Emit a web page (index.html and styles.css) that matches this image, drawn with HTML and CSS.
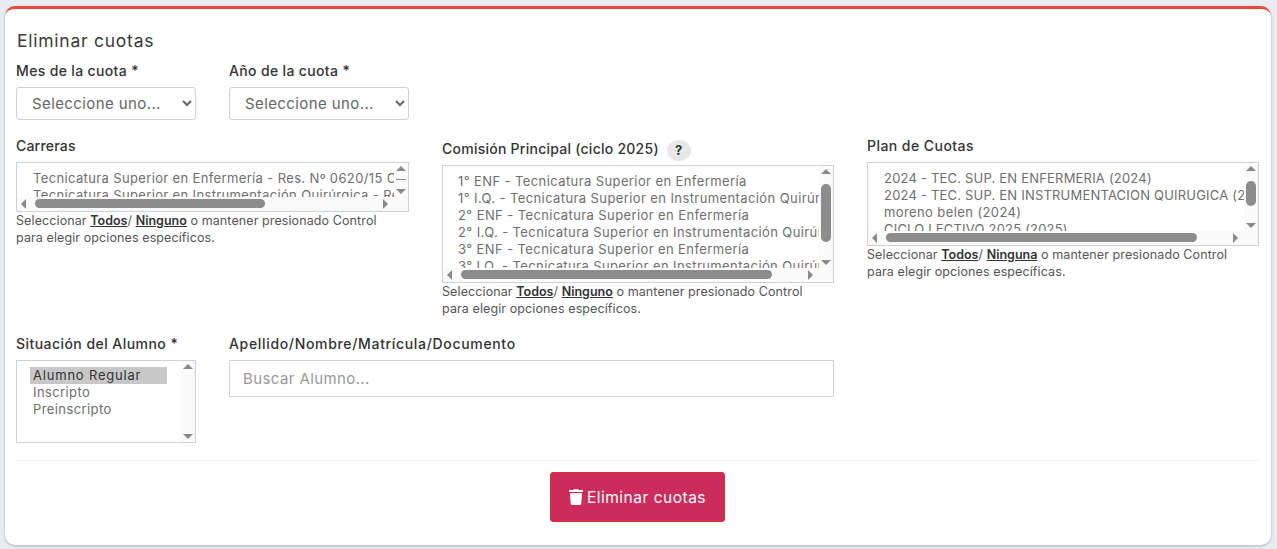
FILE: index.html
```html
<!DOCTYPE html>
<html lang="es">
<head>
<meta charset="utf-8">
<title>Eliminar cuotas</title>
<link rel="stylesheet" href="styles.css">
</head>
<body>
<main class="card">
  <h1 class="title">Eliminar cuotas</h1>
  <div class="pair">
    <div class="field">
      <label class="label">Mes de la cuota *</label>
      <select class="dropdown"><option>Seleccione uno...</option></select>
    </div>
    <div class="field">
      <label class="label">Año de la cuota *</label>
      <select class="dropdown"><option>Seleccione uno...</option></select>
    </div>
  </div>
  <div class="columns">
    <div class="field field-car">
      <label class="label">Carreras</label>
      <div class="listbox lb-carreras">
        <div class="opt">Tecnicatura Superior en Enfermería - Res. Nº 0620/15 C.E.</div>
        <div class="opt">Tecnicatura Superior en Instrumentación Quirúrgica - Res. Nº</div>
        <div class="vbar"><i class="up"></i><b class="vthumb vt-carreras"></b><i class="down"></i></div>
        <div class="hbar"><i class="left"></i><b class="hthumb ht-carreras"></b><i class="right"></i></div>
      </div>
      <p class="help">Seleccionar <a>Todos</a>/ <a>Ninguno</a> o mantener presionado Control<br>para elegir opciones específicos.</p>
    </div>
    <div class="field field-com">
      <label class="label">Comisión Principal (ciclo 2025) <span class="badge">?</span></label>
      <div class="listbox lb-comision">
        <div class="opt">1° ENF - Tecnicatura Superior en Enfermería</div>
        <div class="opt">1° I.Q. - Tecnicatura Superior en Instrumentación Quirúrgica</div>
        <div class="opt">2° ENF - Tecnicatura Superior en Enfermería</div>
        <div class="opt">2° I.Q. - Tecnicatura Superior en Instrumentación Quirúrgica</div>
        <div class="opt">3° ENF - Tecnicatura Superior en Enfermería</div>
        <div class="opt">3° I.Q. - Tecnicatura Superior en Instrumentación Quirúrgica</div>
        <div class="vbar"><i class="up"></i><b class="vthumb vt-comision"></b><i class="down"></i></div>
        <div class="hbar"><i class="left"></i><b class="hthumb ht-comision"></b><i class="right"></i></div>
      </div>
      <p class="help">Seleccionar <a>Todos</a>/ <a>Ninguno</a> o mantener presionado Control<br>para elegir opciones específicos.</p>
    </div>
    <div class="field">
      <label class="label">Plan de Cuotas</label>
      <div class="listbox lb-plan">
        <div class="opt opt-caps">2024 - TEC. SUP. EN ENFERMERIA (2024)</div>
        <div class="opt opt-caps">2024 - TEC. SUP. EN INSTRUMENTACION QUIRUGICA (2024)</div>
        <div class="opt">moreno belen (2024)</div>
        <div class="opt opt-caps">CICLO LECTIVO 2025 (2025)</div>
        <div class="vbar"><i class="up"></i><b class="vthumb vt-plan"></b><i class="down"></i></div>
        <div class="hbar"><i class="left"></i><b class="hthumb ht-plan"></b><i class="right"></i></div>
      </div>
      <p class="help">Seleccionar <a>Todos</a>/ <a>Ninguna</a> o mantener presionado Control<br>para elegir opciones específicas.</p>
    </div>
  </div>
  <div class="bottom-row">
    <div class="field situ">
      <label class="label">Situación del Alumno *</label>
      <div class="listbox lb-situ">
        <div class="opt opt-selected">Alumno Regular</div>
        <div class="opt">Inscripto</div>
        <div class="opt">Preinscripto</div>
        <div class="vbar vbar-full"><i class="up"></i><i class="down"></i></div>
      </div>
    </div>
    <div class="field search">
      <label class="label">Apellido/Nombre/Matrícula/Documento</label>
      <input class="text-input" type="text" placeholder="Buscar Alumno...">
    </div>
  </div>
  <hr class="divider">
  <div class="actions">
    <button class="danger" type="button">
      <svg class="trash" viewBox="0 0 448 512" aria-hidden="true"><path fill="currentColor" d="M432 32H312l-9.4-18.7A24 24 0 0 0 281.1 0H166.8a23.72 23.72 0 0 0-21.4 13.3L136 32H16A16 16 0 0 0 0 48v32a16 16 0 0 0 16 16h416a16 16 0 0 0 16-16V48a16 16 0 0 0-16-16zM53.2 467a48 48 0 0 0 47.9 45h245.8a48 48 0 0 0 47.9-45L416 128H32z"/></svg>
      <span>Eliminar cuotas</span>
    </button>
  </div>
</main>
</body>
</html>
```
FILE: styles.css
```css
* { box-sizing: border-box; }
html, body { height: 100%; }
body {
  margin: 0;
  padding: 6px 6px 4px 5px;
  background: #e9edf3;
  font-family: Inter, "Open Sans", sans-serif;
  color: #333;
  overflow: hidden;
}
.card {
  height: 539px;
  background: #fff;
  border-top: 3px solid #e74c3c;
  border-radius: 10px;
  box-shadow: 0 1px 3px rgba(60, 70, 90, .35);
  padding: 21px 12px 0 11px;
}
.title {
  margin: 0;
  padding-left: 1px;
  font-size: 17.5px;
  line-height: 22px;
  font-weight: 400;
  letter-spacing: .75px;
  color: #3a3a3a;
}
.label {
  display: block;
  font-size: 14px;
  line-height: 17px;
  font-weight: 500;
  color: #333;
  letter-spacing: .45px;
}
.pair .label { letter-spacing: .35px; }
.field-car .label { letter-spacing: .2px; }
.field-com .label { letter-spacing: .25px; }
.search .label { letter-spacing: .67px; }
.pair {
  display: flex;
  gap: 33px;
  margin-top: 10px;
}
.pair .field { width: 180px; }
.dropdown {
  display: block;
  width: 100%;
  height: 33px;
  margin-top: 8px;
  padding: 0 8px 0 11px;
  border: 1px solid #ccd2dc;
  border-radius: 3px;
  background: #fff;
  font: 400 15px Inter, sans-serif;
  letter-spacing: .4px;
  color: #666;
}
.columns {
  display: grid;
  grid-template-columns: 393px 392px 392px;
  column-gap: 33px;
  align-items: start;
  margin-top: 17px;
}
.columns .listbox { margin-top: 8px; }
.field-com { padding-top: 3px; }
.columns .lb-comision { margin-top: 4px; }
.listbox {
  position: relative;
  overflow: hidden;
  border: 1px solid #ccd2dc;
  padding: 7px 0 0 12px;
  background: #fff;
  white-space: nowrap;
}
.opt {
  height: 17px;
  line-height: 17px;
  font-size: 13px;
  letter-spacing: .4px;
  padding-left: 3px;
  color: #6e6e6e;
}
.lb-carreras .opt { letter-spacing: .36px; }
.opt-caps { letter-spacing: .2px; }
.opt-selected {
  width: 137px;
  background: #c8c8c8;
  color: #333;
  letter-spacing: .8px;
}
.lb-carreras { height: 50px; padding-left: 13px; }
.lb-comision { height: 118px; }
.lb-plan { height: 84px; padding-left: 13px; }
.lb-situ { height: 83px; padding: 6px 0 0 13px; margin-top: 8px; }
.vbar {
  position: absolute;
  top: 0;
  right: 0;
  bottom: 14px;
  width: 14px;
  background: #fafafa;
}
.vbar-full { bottom: 0; }
.hbar {
  position: absolute;
  left: 0;
  right: 0;
  bottom: 0;
  height: 14px;
  background: #fafafa;
}
.up, .down, .left, .right {
  position: absolute;
  width: 0;
  height: 0;
  border: 4px solid transparent;
}
.up { top: 3px; left: 2px; border-width: 0 5px 5px; border-bottom-color: #8a8a8a; }
.down { bottom: 3px; left: 2px; border-width: 5px 5px 0; border-top-color: #8a8a8a; }
.left { left: 4px; top: 2px; border-width: 5px 5px 5px 0; border-right-color: #8a8a8a; }
.right { right: 20px; top: 2px; border-width: 5px 0 5px 5px; border-left-color: #8a8a8a; }
.vthumb, .hthumb {
  position: absolute;
  display: block;
  background: #8c8c8c;
  border-radius: 5px;
}
.vthumb { left: 2px; width: 10px; }
.hthumb { top: 2px; height: 9px; }
.vt-carreras { top: 16px; height: 1px; border-radius: 0; }
.vt-comision { top: 18px; height: 58px; }
.vt-plan { top: 18px; height: 25px; }
.ht-carreras { left: 18px; width: 230px; }
.ht-comision { left: 18px; width: 311px; }
.ht-plan { left: 18px; width: 311px; }
.help {
  margin: 0;
  font-size: 12.5px;
  line-height: 17px;
  letter-spacing: .1px;
  color: #555;
}
.help a {
  font-weight: 600;
  letter-spacing: 0;
  color: #333;
  text-decoration: underline;
}
.badge {
  display: inline-block;
  width: 24px;
  height: 21px;
  margin-left: 4px;
  border-radius: 50%;
  background: #e8e8e8;
  font-size: 13px;
  line-height: 21px;
  font-weight: 700;
  text-align: center;
  vertical-align: middle;
}
.bottom-row {
  display: flex;
  gap: 33px;
  margin-top: 18px;
}
.situ { width: 180px; }
.search { width: 605px; }
.text-input {
  display: block;
  width: 100%;
  height: 37px;
  margin-top: 8px;
  padding: 0 13px;
  border: 1px solid #ccd2dc;
  font: 400 15px Inter, sans-serif;
  letter-spacing: .4px;
  color: #555;
}
.text-input::placeholder { color: #999; opacity: 1; }
.divider {
  margin: 17px 0 0;
  border: 0;
  border-top: 1px solid #f1f1f3;
}
.actions {
  display: flex;
  justify-content: center;
  margin-top: 11px;
}
.danger {
  display: flex;
  align-items: center;
  justify-content: center;
  gap: 4px;
  width: 175px;
  height: 50px;
  border: 1px solid #d8312f;
  border-radius: 3px;
  background: #cd2c5a;
  color: #fff;
  font: 400 15.5px Inter, sans-serif;
  letter-spacing: .5px;
}
.trash { width: 14px; height: 16px; }
```
